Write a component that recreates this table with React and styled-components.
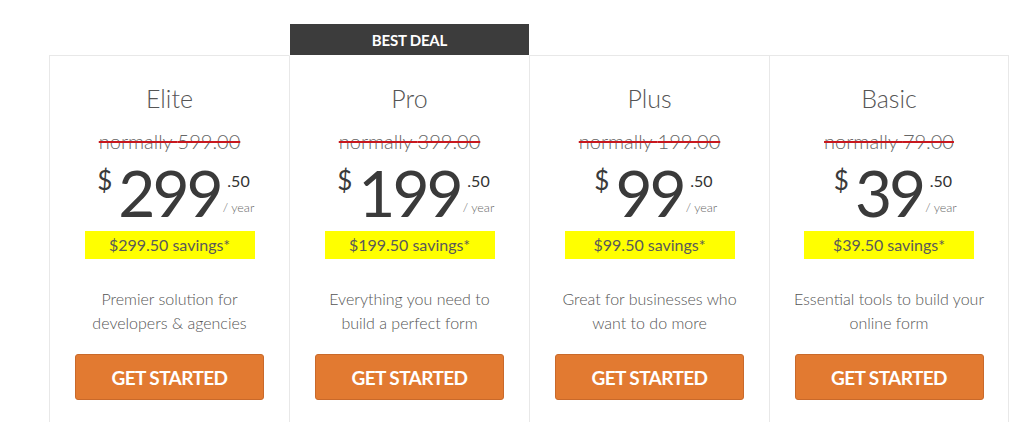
import React from "react";
import styled, { createGlobalStyle } from "styled-components";

const GlobalStyle = createGlobalStyle`
  html, body { margin: 0; padding: 0; background: #fff; }
  body { font-family: Lato, "Open Sans", sans-serif; overflow: hidden; }
`;

const Page = styled.div`
  padding: 24px 0 0 49px;
  width: 1010px;
  height: 422px;
  box-sizing: border-box;
  overflow: hidden;
`;

const Row = styled.div`
  display: grid;
  grid-template-columns: repeat(4, 240px);
`;

const Column = styled.div`
  display: flex;
  flex-direction: column;
`;

const Banner = styled.div`
  height: 31px;
  background: ${(p) => (p.$show ? "#3c3c3c" : "transparent")};
  color: #fff;
  font-family: Lato, sans-serif;
  font-weight: 700;
  font-size: 15px;
  line-height: 32px;
  text-align: center;
  letter-spacing: -0.2px;
  margin-left: ${(p) => (p.$show ? "1px" : "0")};
`;

const Card = styled.div`
  border-top: 1px solid #e8e8e8;
  border-left: 1px solid #e8e8e8;
  border-right: ${(p) => (p.$last ? "1px solid #e8e8e8" : "none")};
  border-top-color: ${(p) => (p.$featured ? "transparent" : "#e8e8e8")};
  height: 400px;
  box-sizing: border-box;
  display: flex;
  flex-direction: column;
  align-items: center;
  padding-top: 27px;
`;

const Title = styled.div`
  font-weight: 300;
  font-size: 25px;
  line-height: 30px;
  color: #555;
`;

const Was = styled.div`
  margin-top: 16px;
  font-weight: 300;
  font-size: 20px;
  line-height: 24px;
  color: #666;
  text-decoration: line-through;
  text-decoration-color: #c8171e;
  text-decoration-thickness: 2px;
`;

const PriceRow = styled.div`
  display: grid;
  grid-template-columns: 1fr auto 1fr;
  align-items: start;
  align-self: stretch;
  margin-top: 9px;
  height: 62px;
  color: #333;
`;

const Currency = styled.span`
  justify-self: end;
  font-size: 26px;
  font-weight: 400;
  line-height: 24px;
  margin-top: 6px;
  margin-right: 6px;
  color: #3a3a3a;
`;

const Amount = styled.span`
  font-size: 64px;
  font-weight: 400;
  line-height: 62px;
  letter-spacing: -3px;
  color: #3a3a3a;
`;

const Side = styled.div`
  justify-self: start;
  display: flex;
  flex-direction: column;
  align-items: center;
  margin-left: 2px;
  margin-top: 10px;
`;

const Cents = styled.span`
  font-size: 16px;
  line-height: 18px;
  color: #333;
`;

const Per = styled.span`
  font-size: 12.5px;
  font-weight: 300;
  line-height: 16px;
  color: #666;
  margin-top: 10px;
`;

const Savings = styled.div`
  margin-top: 7px;
  width: 170px;
  height: 28px;
  background: #ffff00;
  color: #5a5a5a;
  font-size: 16px;
  line-height: 28px;
  text-align: center;
`;

const Desc = styled.div`
  margin-top: 28px;
  font-weight: 300;
  font-size: 16px;
  line-height: 24px;
  color: #555;
  text-align: center;
  width: 220px;
`;

const Button = styled.button`
  margin-top: 19px;
  width: 189px;
  height: 46px;
  background: #e27a31;
  border: 1px solid #c9692a;
  border-radius: 3px;
  color: #fff;
  font-family: Lato, sans-serif;
  font-weight: 700;
  font-size: 19px;
  letter-spacing: -0.6px;
  cursor: pointer;
`;

const plans = [
  { name: "Elite", was: "599.00", amount: "299", save: "$299.50", desc: ["Premier solution for", "developers & agencies"] },
  { name: "Pro", was: "399.00", amount: "199", save: "$199.50", desc: ["Everything you need to", "build a perfect form"], featured: true },
  { name: "Plus", was: "199.00", amount: "99", save: "$99.50", desc: ["Great for businesses who", "want to do more"] },
  { name: "Basic", was: "79.00", amount: "39", save: "$39.50", desc: ["Essential tools to build your", "online form"] },
];

export default function App() {
  return (
    <Page>
      <GlobalStyle />
      <Row>
        {plans.map((p, i) => (
          <Column key={p.name}>
            <Banner $show={p.featured}>{p.featured ? "BEST DEAL" : ""}</Banner>
            <Card $featured={p.featured} $last={i === plans.length - 1}>
              <Title>{p.name}</Title>
              <Was>normally {p.was}</Was>
              <PriceRow>
                <Currency>$</Currency>
                <Amount>{p.amount}</Amount>
                <Side>
                  <Cents>.50</Cents>
                  <Per>/ year</Per>
                </Side>
              </PriceRow>
              <Savings>{p.save} savings*</Savings>
              <Desc>
                {p.desc[0]}
                <br />
                {p.desc[1]}
              </Desc>
              <Button>GET STARTED</Button>
            </Card>
          </Column>
        ))}
      </Row>
    </Page>
  );
}
